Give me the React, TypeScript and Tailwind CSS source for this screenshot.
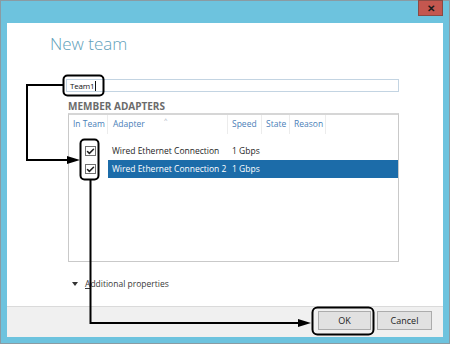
import { Check } from "lucide-react";

const font = { fontFamily: '"Open Sans", "Noto Sans", sans-serif' };

const columns = [
  { label: "In Team", w: "w-[39px]" },
  { label: "Adapter", w: "w-[120px]" },
  { label: "Speed", w: "w-[34px]" },
  { label: "State", w: "w-[28px]" },
  { label: "Reason", w: "w-[36px]" },
];

const adapters = [
  { name: "Wired Ethernet Connection", speed: "1 Gbps", selected: false },
  { name: "Wired Ethernet Connection 2", speed: "1 Gbps", selected: true },
];

const Checkbox = () => (
  <div className="flex h-[10px] w-[11px] items-center justify-center border border-[#707070] bg-white">
    <Check className="h-[9px] w-[9px] text-[#202020]" strokeWidth={4} />
  </div>
);

const Annotations = () => (
  <svg
    className="pointer-events-none absolute left-0 top-0"
    width={450}
    height={345}
    viewBox="0 0 450 345"
    fill="none"
  >
    <rect x={63.5} y={75.5} width={40} height={20} rx={4} stroke="#000" strokeWidth={2} />
    <rect x={80.5} y={139.5} width={18} height={40} rx={4} stroke="#000" strokeWidth={2} />
    <rect x={312.5} y={307.5} width={61} height={27} rx={5} stroke="#000" strokeWidth={2} />
    <path d="M63 85 H27 V160 H68" stroke="#000" strokeWidth={2} />
    <polygon points="67,156 80,160 67,164" fill="#000" />
    <path d="M90.5 180 V323 H299" stroke="#000" strokeWidth={2} />
    <polygon points="298,319 311,323 298,327" fill="#000" />
  </svg>
);

export default function App() {
  return (
    <div className="relative h-[345px] w-[450px] bg-white" style={font}>
      <div className="flex h-[344px] flex-col border border-[#8a9ba3] bg-[#6dc3de]">
        {/* title bar */}
        <div className="flex h-[22px] shrink-0 justify-end pr-[6px]">
          <div className="-mt-px flex h-[16px] w-[25px] items-center justify-center border border-[#8a4a44] bg-[#c4574f] text-[10px] font-bold leading-none text-[#1a1a1a]">
            ✕
          </div>
        </div>

        {/* dialog body */}
        <div className="mx-[6px] flex flex-1 flex-col bg-white">
          <div className="pl-[43px] pt-[11px] text-[17px] font-light leading-[20px] text-[#5f9fba]">
            New team
          </div>

          <div className="ml-[59px] mt-[25px] flex w-[333px] flex-col">
            <div className="flex h-[13px] items-center border border-[#c3d4e2] pl-[3px] text-[8px] leading-none tracking-[-0.2px] text-[#111]">
              Team1<span className="ml-px h-[10px] w-px bg-[#111]" />
            </div>

            <div className="ml-[2px] mt-[8px] text-[10px] font-bold leading-[12px] text-[#6b6b6b]">
              MEMBER ADAPTERS
            </div>

            <div className="ml-[2px] mt-px flex h-[149px] flex-col border border-t-2 border-[#c9c9c9] border-t-[#d6d6d6]">
              <div className="flex h-[19px] text-[8.5px] leading-none text-[#4a80b8]">
                {columns.map((c, i) => (
                  <div
                    key={c.label}
                    className={`relative flex items-center border-r border-[#ececec] ${c.w} ${i === 1 ? "pl-[5px]" : "pl-[4px]"}`}
                  >
                    {c.label}
                    {i === 1 && (
                      <span className="absolute left-[56px] top-[2px] text-[6px] leading-none text-[#9aa7b4]">^</span>
                    )}
                  </div>
                ))}
              </div>

              <div className="mt-[8px] flex flex-col">
                {adapters.map((a) => (
                  <div key={a.name} className="flex h-[18px] items-center text-[8.5px] leading-none">
                    <div className="flex w-[39px] pl-[16px]">
                      <Checkbox />
                    </div>
                    <div
                      className={`flex h-full flex-1 items-center ${a.selected ? "bg-[#1c6ca9] text-white" : "text-[#1e1e1e]"}`}
                    >
                      <div className="w-[120px] pl-[4px]">{a.name}</div>
                      <div className="pl-[4px]">{a.speed}</div>
                    </div>
                  </div>
                ))}
              </div>
            </div>
          </div>

          <div className="ml-[65px] mt-[16px] flex h-[12px] items-center text-[8.5px] leading-none text-[#3a3a3a]">
            <svg width="6" height="4" viewBox="0 0 6 4" className="mr-[7px]">
              <path d="M0 0 L6 0 L3 4 Z" fill="#333" />
            </svg>
            <span>
              <span className="underline">A</span>dditional properties
            </span>
          </div>

          <div className="flex-1" />

          {/* footer */}
          <div className="flex h-[31px] justify-end gap-[6px] border-t border-[#dadada] bg-[#f0f0f0] pr-[11px] pt-[4px]">
            <div className="flex h-[19px] w-[53px] items-center justify-center border border-[#acacac] bg-[#e1e1e1] text-[9px] leading-none text-[#222]">
              OK
            </div>
            <div className="flex h-[19px] w-[55px] items-center justify-center border border-[#acacac] bg-[#e1e1e1] text-[9px] leading-none text-[#222]">
              Cancel
            </div>
          </div>
        </div>

        <div className="h-[6px] shrink-0" />
      </div>

      <Annotations />
    </div>
  );
}
